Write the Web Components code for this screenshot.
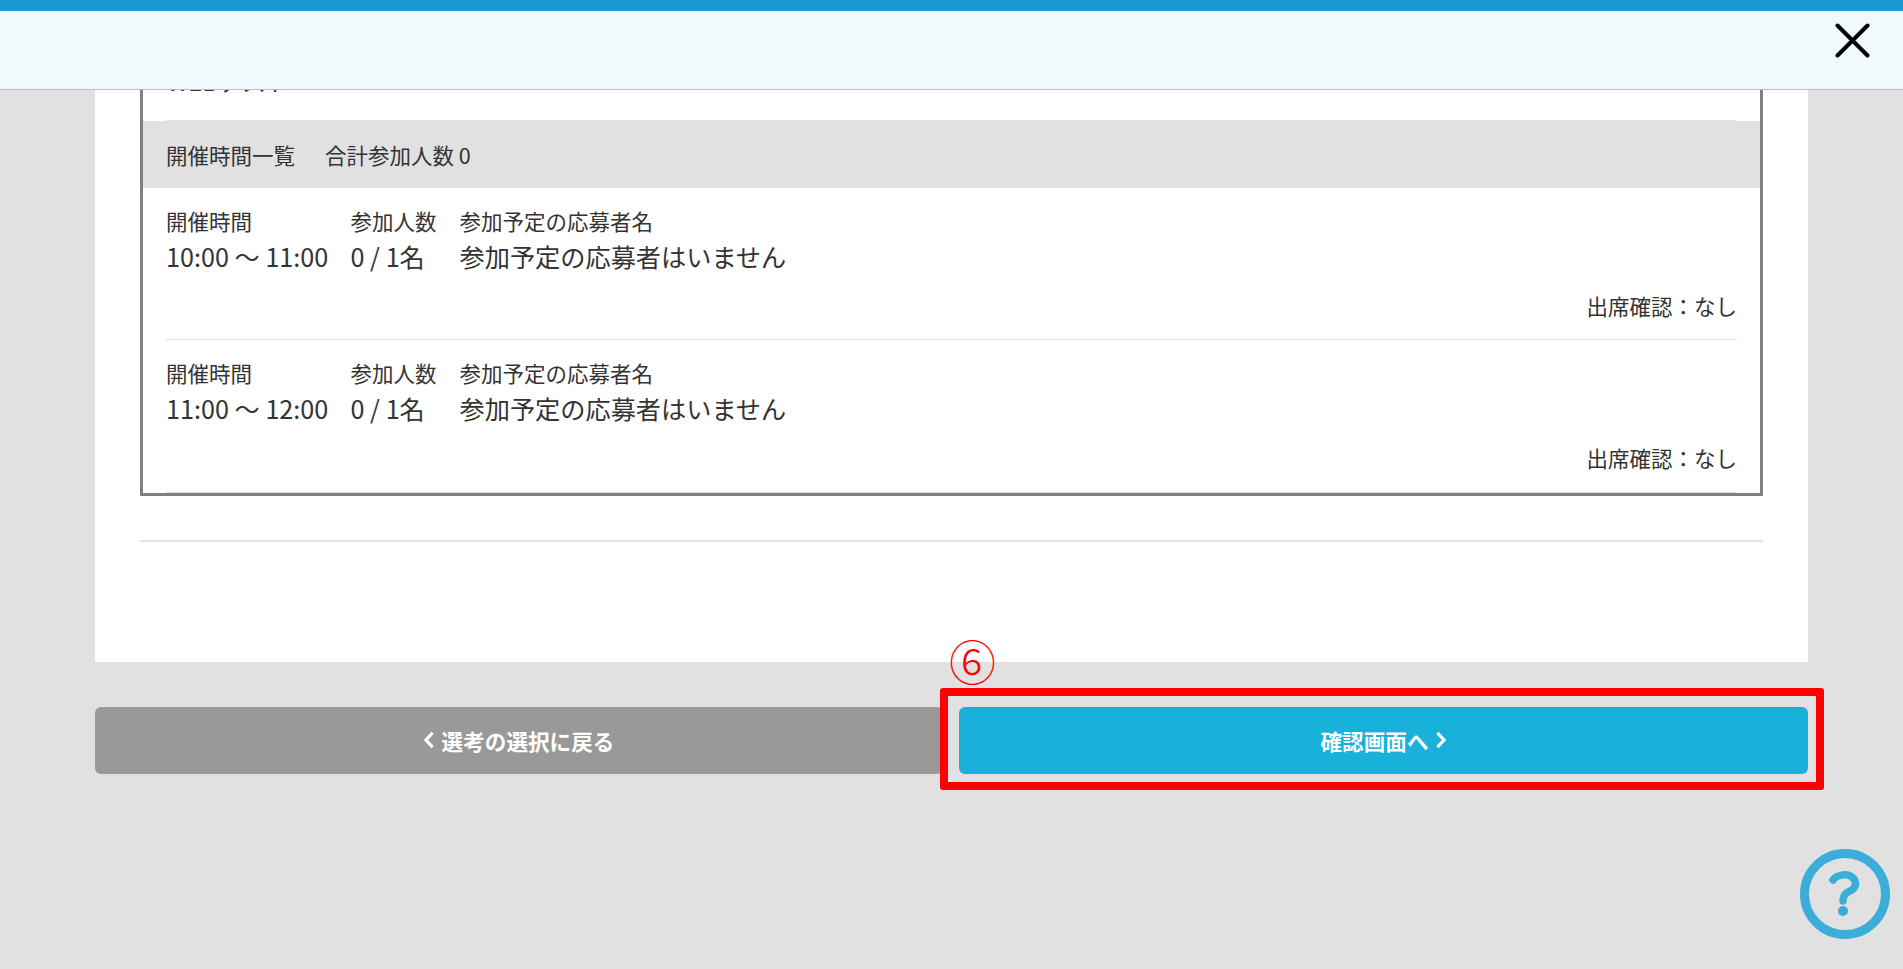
<!DOCTYPE html>
<html lang="ja"><head><meta charset="utf-8"><title>確認</title>
<style>
html,body{margin:0;padding:0;height:969px;overflow:hidden;background:#e1e1e1;font-family:"Noto Sans CJK JP","Noto Sans",sans-serif;color:#333}
</style></head><body>
<x-page>
  <x-panel>
    <x-schedule title-text="WEBテスト" total="合計参加人数 0">
      <x-session time="10:00 ～ 11:00"></x-session>
      <x-session time="11:00 ～ 12:00"></x-session>
    </x-schedule>
  </x-panel>
  <x-actions>
    <x-btn kind="back">選考の選択に戻る</x-btn>
    <x-btn kind="next">確認画面へ</x-btn>
  </x-actions>
</x-page>
<script>
function def(name,html){
  customElements.define(name,class extends HTMLElement{
    connectedCallback(){
      if(this.shadowRoot)return;
      const r=this.attachShadow({mode:"open"});
      r.innerHTML=typeof html==="function"?html(this):html;
    }
  });
}
def("x-page",`<style>
:host{display:block;position:relative;width:1903px;height:969px;overflow:hidden;box-sizing:border-box;padding:0 95px}
.n{position:absolute;left:949px;top:631px;width:44px;text-align:center;color:#f00;font-size:47px;font-weight:300;line-height:58px}
.box{position:absolute;left:940px;top:688px;width:884px;height:102px;box-sizing:border-box;border:8px solid #f00;border-radius:3px}
</style><x-topbar></x-topbar><slot></slot><div class="n">⑥</div><div class="box"></div><x-help></x-help>`);
def("x-topbar",`<style>
:host{display:block;position:absolute;z-index:5;left:0;top:0;width:100%;height:90px;box-sizing:border-box;background:#f0f9fc;border-top:11px solid #1a98d5;border-bottom:1px solid #b9bdcd}
.wrap{display:flex;justify-content:flex-end;padding:12px 33px 0 0}
svg{display:block}
</style><div class="wrap"><svg width="35" height="35" viewBox="0 0 35 35" aria-label="閉じる"><path d="M2.5 2.5L32.5 32.5M32.5 2.5L2.5 32.5" stroke="#000" stroke-width="4" stroke-linecap="round" fill="none"/></svg></div>`);
def("x-panel",`<style>
:host{display:block;background:#fff;height:662px;box-sizing:border-box;padding:0 45px}
.rule{height:2px;background:#e4e4e4;margin-top:44px}
</style><slot></slot><div class="rule"></div>`);
def("x-schedule",h=>`<style>
:host{display:block;border:3px solid #808080;height:496px;box-sizing:border-box;font-size:21.5px;color:#333}
.title{height:117px;box-sizing:border-box;padding:0 24px;display:flex;align-items:flex-end}
.title span{font-size:24px;line-height:34px;padding-bottom:22px}
.rule{height:1px;margin:0 24px 0 23px;background:#e1e1e1}
.head{height:67px;background:#e1e1e1;display:flex;align-items:center;gap:30px;padding:0 23px;line-height:36px;box-sizing:border-box}
</style><div class="title"><span>${h.getAttribute("title-text")}</span></div><div class="rule"></div>
<div class="head"><span>開催時間一覧</span><span>${h.getAttribute("total")}</span></div><slot></slot>`);
def("x-session",h=>`<style>
:host{display:block;margin:0 23px;height:152px;box-sizing:border-box;border-bottom:1px solid #ddd;padding-top:15px;line-height:36px}
:host(:last-child){height:153px}
.cols{display:grid;grid-template-columns:184.5px 109px 1fr}
.v{font-size:25.2px;line-height:35px;white-space:nowrap}
.l{white-space:nowrap}
.att{text-align:right;margin-top:14px}
</style><div class="cols">
<div><div class="l">開催時間</div><div class="v">${h.getAttribute("time")}</div></div>
<div><div class="l">参加人数</div><div class="v">0 / 1名</div></div>
<div><div class="l">参加予定の応募者名</div><div class="v">参加予定の応募者はいません</div></div>
</div><div class="att">出席確認：なし</div>`);
def("x-actions",`<style>
:host{display:grid;grid-template-columns:848px 849px;gap:16px;margin-top:45px}
</style><slot></slot>`);
def("x-btn",h=>{
 const back=h.getAttribute("kind")==="back";
 const c=d=>`<svg width="10" height="16" viewBox="0 0 10 16"><path d="${d}" stroke="#fff" stroke-width="3.2" fill="none" stroke-linecap="square"/></svg>`;
 return `<style>
:host{display:flex;align-items:center;justify-content:center;gap:8px;height:67px;border-radius:6px;background:${back?"#999":"#17b1da"};color:#fff;font-weight:700;font-size:21.6px;line-height:30px}
svg{display:block;margin-top:-1px}
</style>${back?c("M7.5 2L2 8L7.5 14"):""}<slot></slot>${back?"":c("M2.5 2L8 8L2.5 14")}`;
});
def("x-help",`<style>
:host{display:block;position:absolute;left:1800px;top:849px;width:90px;height:90px}
svg{display:block}
</style><svg width="90" height="90" viewBox="0 0 90 90" aria-label="ヘルプ"><circle cx="45" cy="45" r="40.5" fill="none" stroke="#3aaed8" stroke-width="9"/><path d="M33 31C36 26 47 24 52 28C58 33 56 39 50 42C45 44 43 47 43 52" fill="none" stroke="#3aaed8" stroke-width="7.5" stroke-linecap="round"/><circle cx="43" cy="62" r="5" fill="#3aaed8"/></svg>`);
</script>
</body></html>
